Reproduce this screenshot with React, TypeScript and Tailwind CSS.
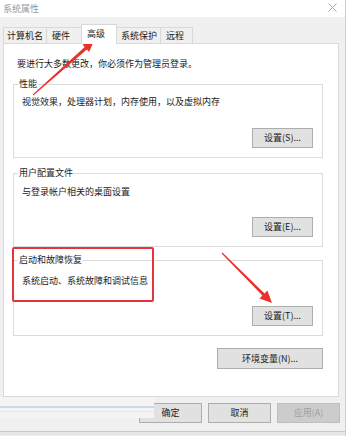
const tabs = [
  { label: '计算机名', w: 'w-[43px]', pl: 'pl-[3px]' },
  { label: '硬件', w: 'w-[35px]', pl: 'pl-[5px]' },
];
const tabsAfter = [
  { label: '系统保护', w: 'w-[43px]', pl: 'pl-[4px]' },
  { label: '远程', w: 'w-[33px]', pl: 'pl-[5px]' },
];

function GroupBox({
  title,
  desc,
  button,
  className = '',
  descMt,
  btnMt,
}: {
  title: string;
  desc: string;
  button: string;
  className?: string;
  descMt: string;
  btnMt: string;
}) {
  return (
    <fieldset className={`border border-[#dcdcdc] w-[310px] ${className}`}>
      <legend className="ml-[4px] px-[1px]">{title}</legend>
      <div className={`pl-[8px] ${descMt}`}>{desc}</div>
      <div className={`flex justify-end pr-[9px] pb-[9px] ${btnMt}`}>
        <button className="w-[61px] h-[20px] bg-[#e1e1e1] border border-[#adadad] flex items-center justify-center">
          {button}
        </button>
      </div>
    </fieldset>
  );
}

export default function App() {
  return (
    <div className="relative w-[346px] h-[436px] overflow-hidden bg-[#f0f0f0] border-r border-[#cfcfcf] font-['Noto_Sans_CJK_SC',sans-serif] text-[9px] leading-[12px] text-[#1a1a1a]">
      {/* title bar */}
      <div className="h-[17px] bg-white flex items-center justify-between pl-[3px] pr-[8px] text-[#9a9a9a]">
        <span>系统属性</span>
        <svg width="9" height="9" viewBox="0 0 9 9" className="mt-[-2px]">
          <path d="M0.5 0.5 L8.5 8.5 M8.5 0.5 L0.5 8.5" stroke="#a8a8a8" strokeWidth="1" />
        </svg>
      </div>

      {/* tabs */}
      <div className="mt-[7px] pl-[3px] flex items-end h-[19px]">
        {tabs.map((t) => (
          <div
            key={t.label}
            className={`${t.w} ${t.pl} h-[16px] border-t border-l border-[#d9d9d9] bg-[#f0f0f0] flex items-center`}
          >
            {t.label}
          </div>
        ))}
        <div className="w-[36px] h-[20px] mb-[-1px] relative z-10 bg-white border-t border-l border-r border-[#d9d9d9] pl-[5px] pt-[3px]">
          高级
        </div>
        {tabsAfter.map((t, i) => (
          <div
            key={t.label}
            className={`${t.w} ${t.pl} h-[16px] border-t border-[#d9d9d9] bg-[#f0f0f0] flex items-center ${
              i === tabsAfter.length - 1 ? 'border-r border-l' : ''
            }`}
          >
            {t.label}
          </div>
        ))}
      </div>

      {/* panel */}
      <div className="ml-[3px] w-[336px] h-[354px] bg-white border border-[#d9d9d9] pl-[9px] pr-[15px] pt-[14px]">
        <div className="pl-[4px]">要进行大多数更改，你必须作为管理员登录。</div>

        <GroupBox
          title="性能"
          desc="视觉效果，处理器计划，内存使用，以及虚拟内存"
          button="设置(S)..."
          className="mt-[8px]"
          descMt="mt-[6px]"
          btnMt="mt-[20px]"
        />
        <GroupBox
          title="用户配置文件"
          desc="与登录帐户相关的桌面设置"
          button="设置(E)..."
          className="mt-[9px]"
          descMt="mt-[7px]"
          btnMt="mt-[19px]"
        />
        <GroupBox
          title="启动和故障恢复"
          desc="系统启动、系统故障和调试信息"
          button="设置(T)..."
          className="mt-[7px]"
          descMt="mt-[9px]"
          btnMt="mt-[19px]"
        />

        <div className="flex justify-end mt-[12px] w-[310px]">
          <button className="w-[106px] h-[21px] bg-[#e1e1e1] border border-[#adadad] flex items-center justify-center">
            环境变量(N)...
          </button>
        </div>
      </div>

      {/* dialog buttons */}
      <div className="mt-[6px] flex justify-end gap-[6px] pr-[5px]">
        <button className="w-[63px] h-[20px] bg-[#e1e1e1] border border-[#adadad] flex items-center justify-center">
          确定
        </button>
        <button className="w-[63px] h-[20px] bg-[#e1e1e1] border border-[#adadad] flex items-center justify-center">
          取消
        </button>
        <button className="w-[63px] h-[20px] bg-[#cccccc] border border-[#bfbfbf] text-[#a0a0a0] flex items-center justify-center">
          应用(A)
        </button>
      </div>
      <div className="mt-[8px] border-t border-[#c8c8c8] h-[4px] bg-[#e6e6e6]" />

      {/* smeared patch bottom-left */}
      <div className="absolute left-0 top-[397px] w-[154px] h-[21px] bg-[#f6f3f4] flex flex-col">
        <div className="mt-[9px] h-[2px] bg-[#c4dcf0]" />
        <div className="mt-[3px] h-[1px] bg-[#e2eedb]" />
      </div>

      {/* red highlight box */}
      <div className="absolute left-[12px] top-[247px] w-[142px] h-[55px] border-2 border-[#e2363a] rounded-[2px]" />

      {/* arrows */}
      <svg className="absolute inset-0 pointer-events-none" width="346" height="436" viewBox="0 0 346 436">
        <polygon
          fill="#e8322d"
          points="32.7,94.6 84.7,47.1 82.5,44.6 94,41 89.1,52 86.9,49.5 33.3,95.4"
        />
        <polygon
          fill="#e8322d"
          points="222.4,252.6 264.6,293.4 267.4,290.6 272,303 259.6,298.4 262.4,295.6 221.6,253.4"
        />
      </svg>
    </div>
  );
}
